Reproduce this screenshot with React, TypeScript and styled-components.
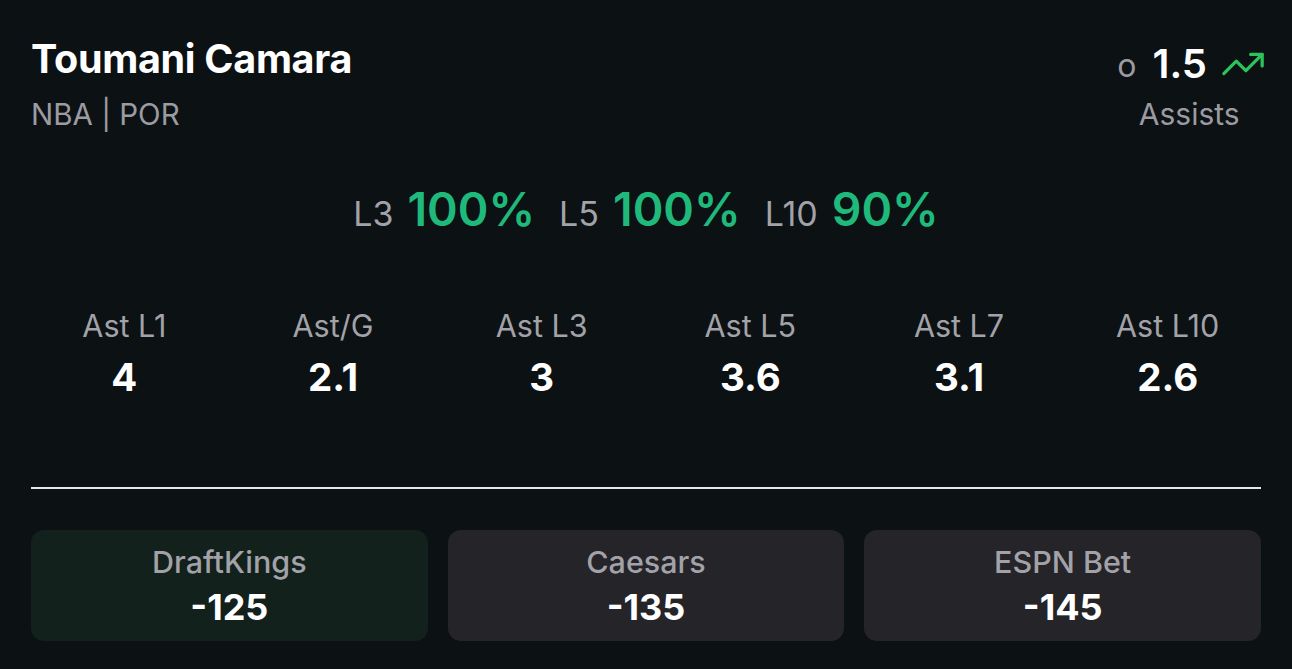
import React from "react";
import styled, { createGlobalStyle } from "styled-components";
import { TrendingUp } from "lucide-react";

const Global = createGlobalStyle`
  html, body { margin: 0; padding: 0; background: #0c1114; }
  body { font-family: Inter, "Noto Sans", sans-serif; -webkit-font-smoothing: antialiased; }
`;

const Page = styled.div`
  width: 1292px;
  height: 669px;
  box-sizing: border-box;
  padding: 34px 31px 0 31px;
  background: #0c1114;
  display: flex;
  flex-direction: column;
`;

const Header = styled.div`
  display: flex;
  justify-content: space-between;
  align-items: flex-start;
`;

const LeftCol = styled.div`
  display: flex;
  flex-direction: column;
`;

const Name = styled.div`
  color: #ffffff;
  font-size: 39.5px;
  font-weight: 700;
  line-height: 50px;
  letter-spacing: -0.3px;
`;

const Sub = styled.div`
  color: #9b9ba1;
  font-size: 29.5px;
  line-height: 36px;
  margin-top: 12px;
`;

const RightCol = styled.div`
  display: flex;
  flex-direction: column;
  align-items: center;
  margin-top: 6px;
`;

const LineRow = styled.div`
  display: flex;
  align-items: center;
  height: 48px;
`;

const OverLetter = styled.span`
  color: #9b9ba1;
  font-size: 32px;
  line-height: 1;
  margin-top: 4px;
  margin-right: 16px;
`;

const LineValue = styled.span`
  color: #ffffff;
  font-size: 40px;
  font-weight: 600;
  line-height: 1;
  margin-right: 13px;
`;

const TrendIcon = styled(TrendingUp)`
  margin-right: -5px;
  flex-shrink: 0;
`;

const Market = styled.div`
  color: #9b9ba1;
  font-size: 30px;
  line-height: 36px;
  margin-top: 8px;
`;

const HitRow = styled.div`
  display: flex;
  justify-content: center;
  align-items: baseline;
  margin-top: 47px;
  height: 60px;
  line-height: 60px;
`;

const HitLabel = styled.span`
  color: #a2a2a8;
  font-size: 34px;
  margin-right: 14px;
`;

const HitValue = styled.span`
  color: #1fba7b;
  font-size: 46.5px;
  font-weight: 600;
  margin-right: 24px;
  &:last-child { margin-right: 0; }
`;

const StatsGrid = styled.div`
  display: grid;
  grid-template-columns: repeat(6, 1fr);
  margin: 68px -11px 0 -11px;
`;

const Stat = styled.div`
  display: flex;
  flex-direction: column;
  align-items: center;
`;

const StatLabel = styled.div`
  color: #a2a2a8;
  font-size: 30.5px;
  line-height: 38px;
`;

const StatValue = styled.div`
  color: #ffffff;
  font-size: 38.5px;
  font-weight: 700;
  line-height: 44px;
  margin-top: 10px;
`;

const Divider = styled.div`
  height: 2px;
  background: #e8e8ea;
  margin-top: 88px;
`;

const Books = styled.div`
  display: grid;
  grid-template-columns: repeat(3, 1fr);
  gap: 20px;
  margin-top: 41px;
`;

const Book = styled.div<{ $active?: boolean }>`
  height: 111px;
  border-radius: 13px;
  background: ${(p) => (p.$active ? "#13211c" : "#252429")};
  display: flex;
  flex-direction: column;
  align-items: center;
  justify-content: center;
`;

const BookName = styled.div`
  color: #a2a2a8;
  font-size: 30.5px;
  line-height: 36px;
  font-weight: 500;
`;

const BookOdds = styled.div`
  color: #ffffff;
  font-size: 36px;
  font-weight: 700;
  line-height: 42px;
  margin-top: 6px;
`;

const hits = [
  { l: "L3", v: "100%" },
  { l: "L5", v: "100%" },
  { l: "L10", v: "90%" },
];

const stats = [
  { l: "Ast L1", v: "4" },
  { l: "Ast/G", v: "2.1" },
  { l: "Ast L3", v: "3" },
  { l: "Ast L5", v: "3.6" },
  { l: "Ast L7", v: "3.1" },
  { l: "Ast L10", v: "2.6" },
];

const books = [
  { n: "DraftKings", o: "-125", active: true },
  { n: "Caesars", o: "-135" },
  { n: "ESPN Bet", o: "-145" },
];

export default function App() {
  return (
    <>
      <Global />
      <Page>
        <Header>
          <LeftCol>
            <Name>Toumani Camara</Name>
            <Sub>NBA | POR</Sub>
          </LeftCol>
          <RightCol>
            <LineRow>
              <OverLetter>o</OverLetter>
              <LineValue>1.5</LineValue>
              <TrendIcon size={46} color="#2cc35c" strokeWidth={1.7} />
            </LineRow>
            <Market>Assists</Market>
          </RightCol>
        </Header>
        <HitRow>
          {hits.map((h) => (
            <React.Fragment key={h.l}>
              <HitLabel>{h.l}</HitLabel>
              <HitValue>{h.v}</HitValue>
            </React.Fragment>
          ))}
        </HitRow>
        <StatsGrid>
          {stats.map((s) => (
            <Stat key={s.l}>
              <StatLabel>{s.l}</StatLabel>
              <StatValue>{s.v}</StatValue>
            </Stat>
          ))}
        </StatsGrid>
        <Divider />
        <Books>
          {books.map((b) => (
            <Book key={b.n} $active={b.active}>
              <BookName>{b.n}</BookName>
              <BookOdds>{b.o}</BookOdds>
            </Book>
          ))}
        </Books>
      </Page>
    </>
  );
}
